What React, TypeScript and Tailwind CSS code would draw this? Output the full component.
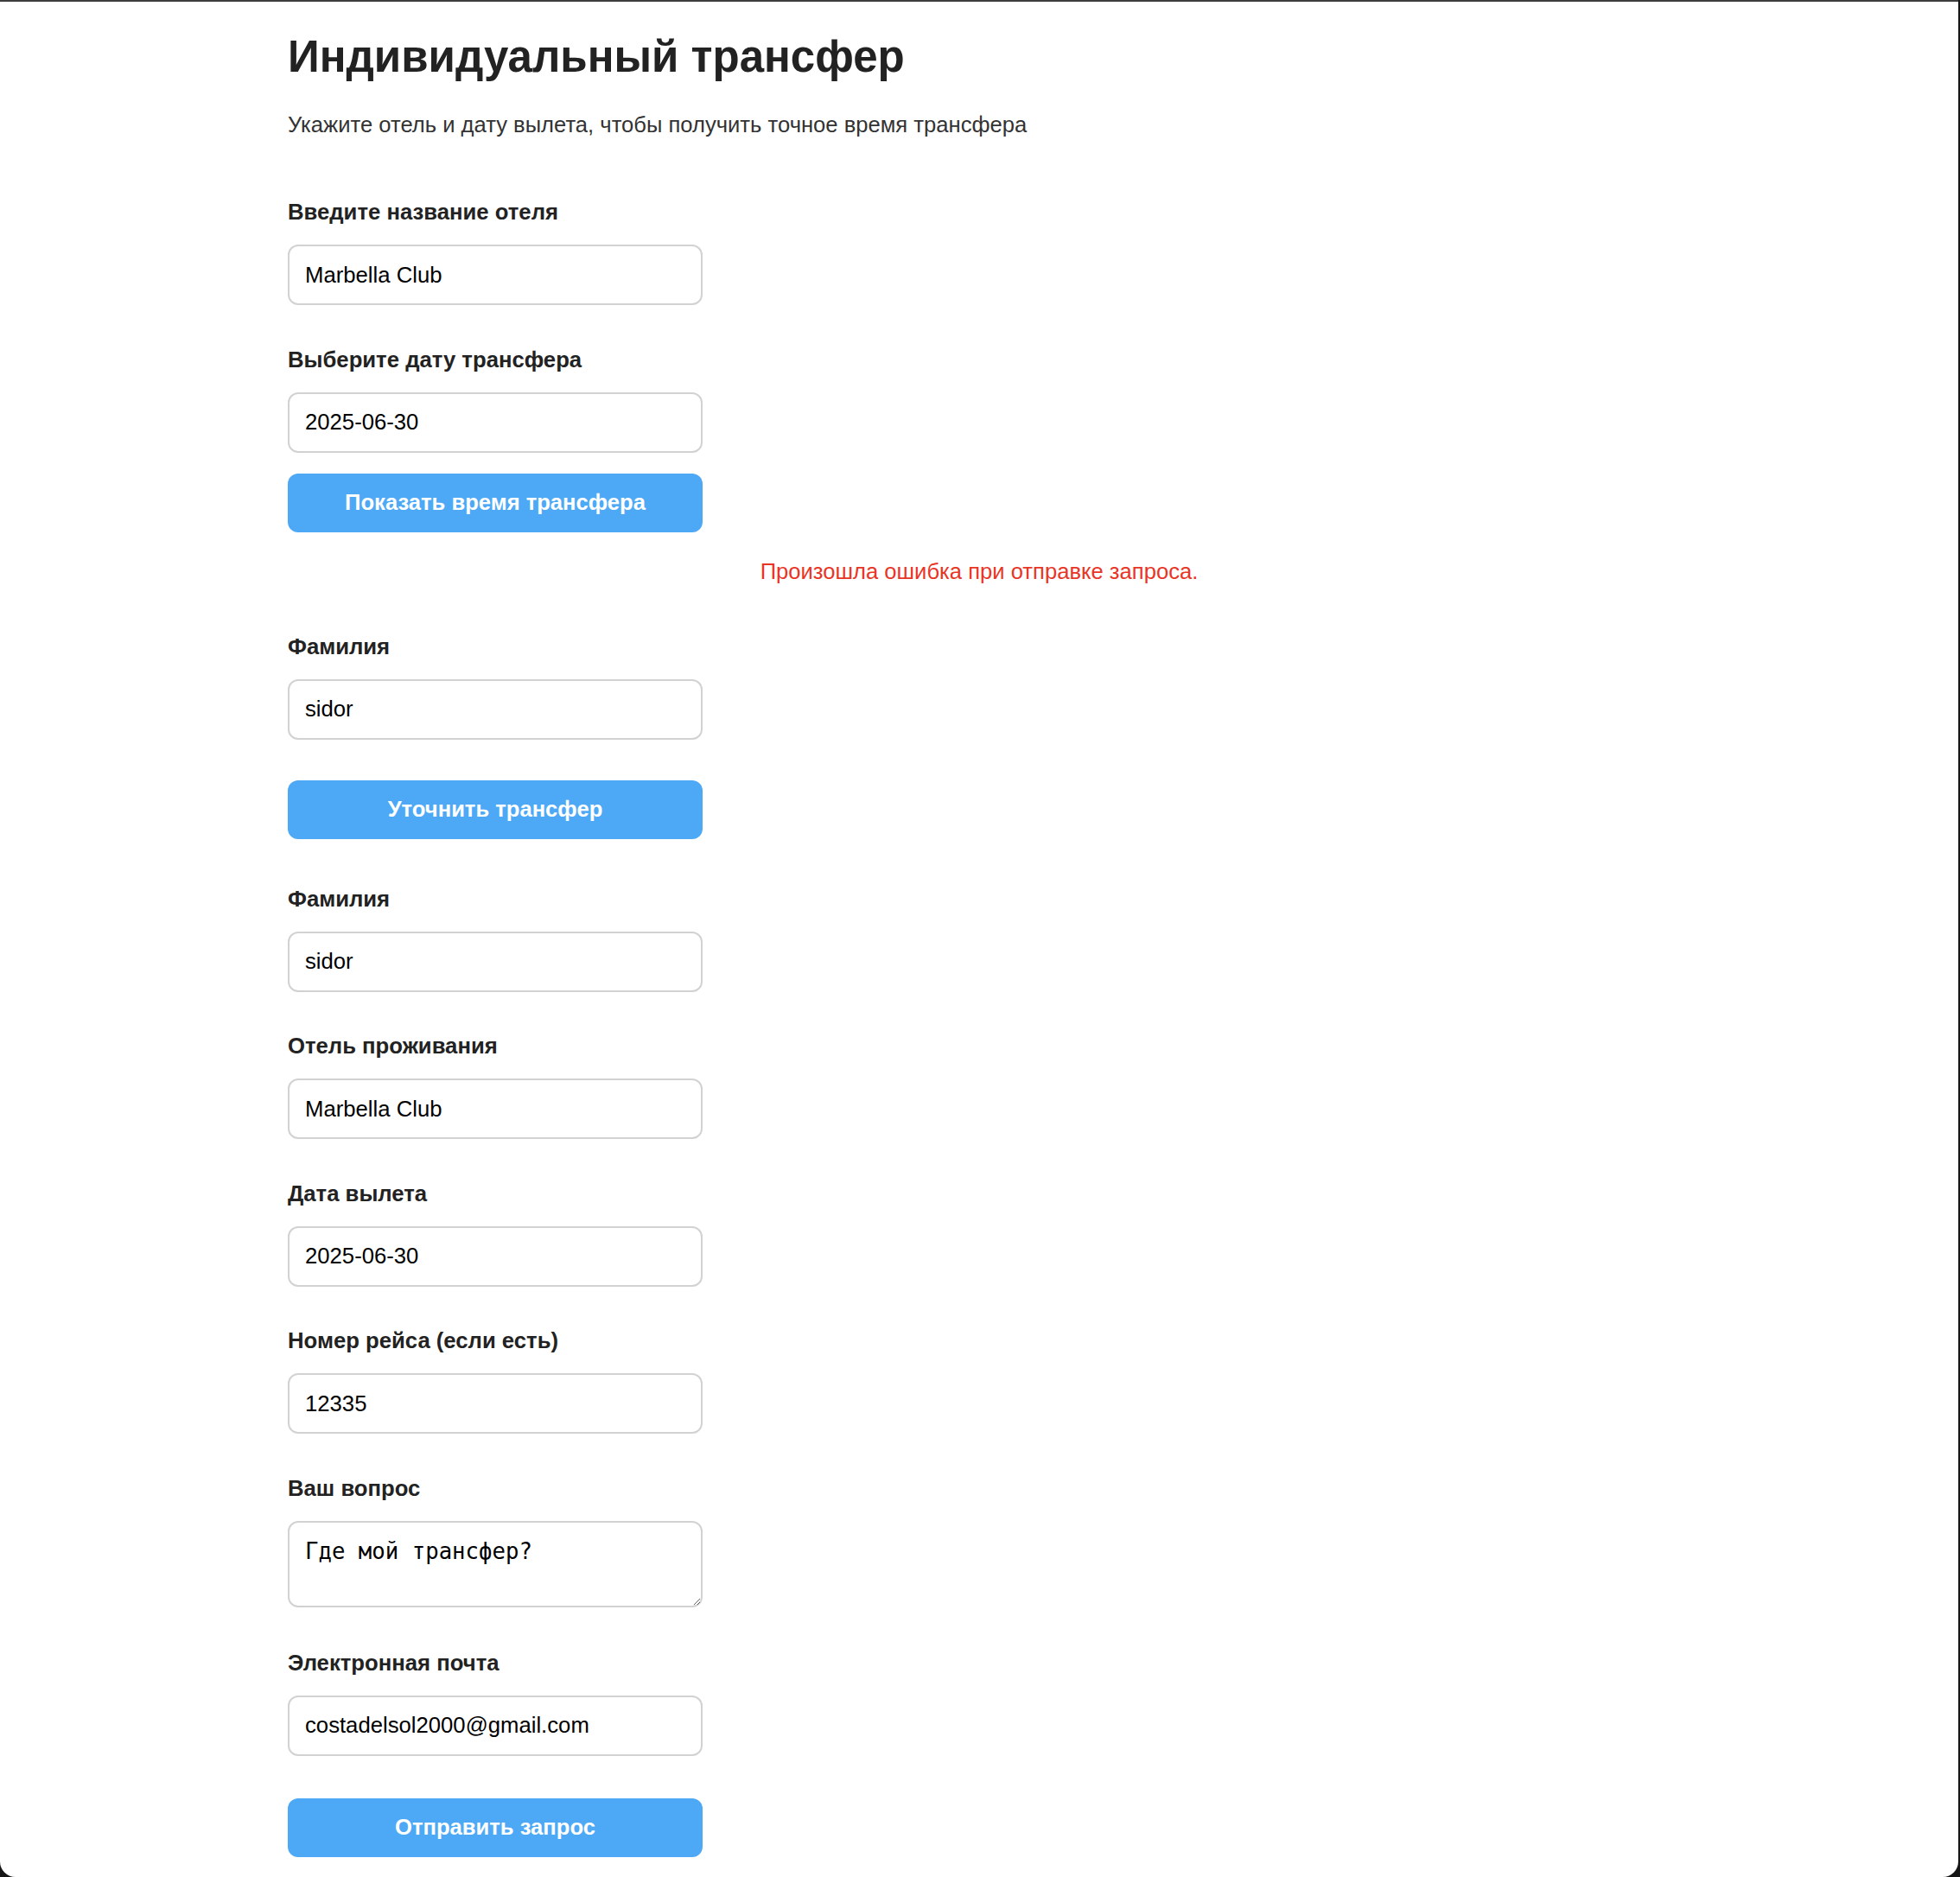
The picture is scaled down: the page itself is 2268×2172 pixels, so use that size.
import React, { useState } from 'react';

const labelCls = 'block text-[25.7px] leading-[30px] font-bold text-[#222] mb-[23px]';
const inputCls =
    'block w-[480px] h-[70px] px-[18px] border-2 border-[#d2d2d2] rounded-[12px] bg-white text-[25.7px] text-black outline-none';
const buttonCls =
    'block w-[480px] h-[68px] rounded-[12px] bg-[#4da9f6] text-white text-[25.6px] font-bold';

type FieldProps = {
    label: string;
    value: string;
    onChange: (v: string) => void;
    first?: boolean;
    gap?: string;
};

const Field: React.FC<FieldProps> = ({ label, value, onChange, first, gap }) => (
    <div className={first ? '' : gap ?? 'mt-[47.5px]'}>
        <label className={labelCls}>{label}</label>
        <input className={inputCls} value={value} onChange={e => onChange(e.target.value)} />
    </div>
);

export default function App() {
    const [hotel, setHotel] = useState('Marbella Club');
    const [date, setDate] = useState('2025-06-30');
    const [surname, setSurname] = useState('sidor');
    const [surname2, setSurname2] = useState('sidor');
    const [hotel2, setHotel2] = useState('Marbella Club');
    const [date2, setDate2] = useState('2025-06-30');
    const [flight, setFlight] = useState('12335');
    const [question, setQuestion] = useState('Где мой трансфер?');
    const [email, setEmail] = useState('costadelsol2000@gmail.com');

    return (
        <div className="w-[2268px] h-[2172px] bg-[#161616] overflow-hidden font-['Liberation_Sans',Arial,sans-serif]">
            <div className="h-full mr-[2px] bg-white border-t-2 border-[#3d3d3d] rounded-b-[18px]">
                <div className="max-w-[1600px] mx-auto pt-[35px]">
                    {/* Header */}
                    <h1 className="text-[51px] leading-[58px] font-bold text-[#222]">Индивидуальный трансфер</h1>
                    <p className="mt-[32px] text-[25.6px] leading-[34px] text-[#333]">
                        Укажите отель и дату вылета, чтобы получить точное время трансфера
                    </p>

                    {/* Step 1: time lookup */}
                    <div className="mt-[69px]">
                        <Field label="Введите название отеля" value={hotel} onChange={setHotel} first />
                        <Field label="Выберите дату трансфера" value={date} onChange={setDate} />
                        <button className={`${buttonCls} mt-[24px]`}>Показать время трансфера</button>
                    </div>

                    <p className="mt-[29px] text-center text-[25.6px] leading-[32px] text-[#e93526]">
                        Произошла ошибка при отправке запроса.
                    </p>

                    {/* Step 2: clarify */}
                    <div className="mt-[56px]">
                        <Field label="Фамилия" value={surname} onChange={setSurname} first />
                        <button className={`${buttonCls} mt-[47px]`}>Уточнить трансфер</button>
                    </div>

                    {/* Step 3: request */}
                    <div className="mt-[54px]">
                        <Field label="Фамилия" value={surname2} onChange={setSurname2} first />
                        <Field label="Отель проживания" value={hotel2} onChange={setHotel2} />
                        <Field label="Дата вылета" value={date2} onChange={setDate2} />
                        <Field label="Номер рейса (если есть)" value={flight} onChange={setFlight} />
                        <div className="mt-[47.5px]">
                            <label className={labelCls}>Ваш вопрос</label>
                            <textarea
                                className="block w-[480px] h-[100px] px-[18px] py-[18px] border-2 border-[#d2d2d2] rounded-[12px] bg-white text-[25.7px] leading-[30px] text-black outline-none font-['DejaVu_Sans_Mono',monospace]"
                                value={question}
                                onChange={e => setQuestion(e.target.value)}
                            />
                        </div>
                        <Field label="Электронная почта" value={email} onChange={setEmail} gap="mt-[49px]" />
                        <button className={`${buttonCls} mt-[49px]`}>Отправить запрос</button>
                    </div>
                </div>
            </div>
        </div>
    );
}
